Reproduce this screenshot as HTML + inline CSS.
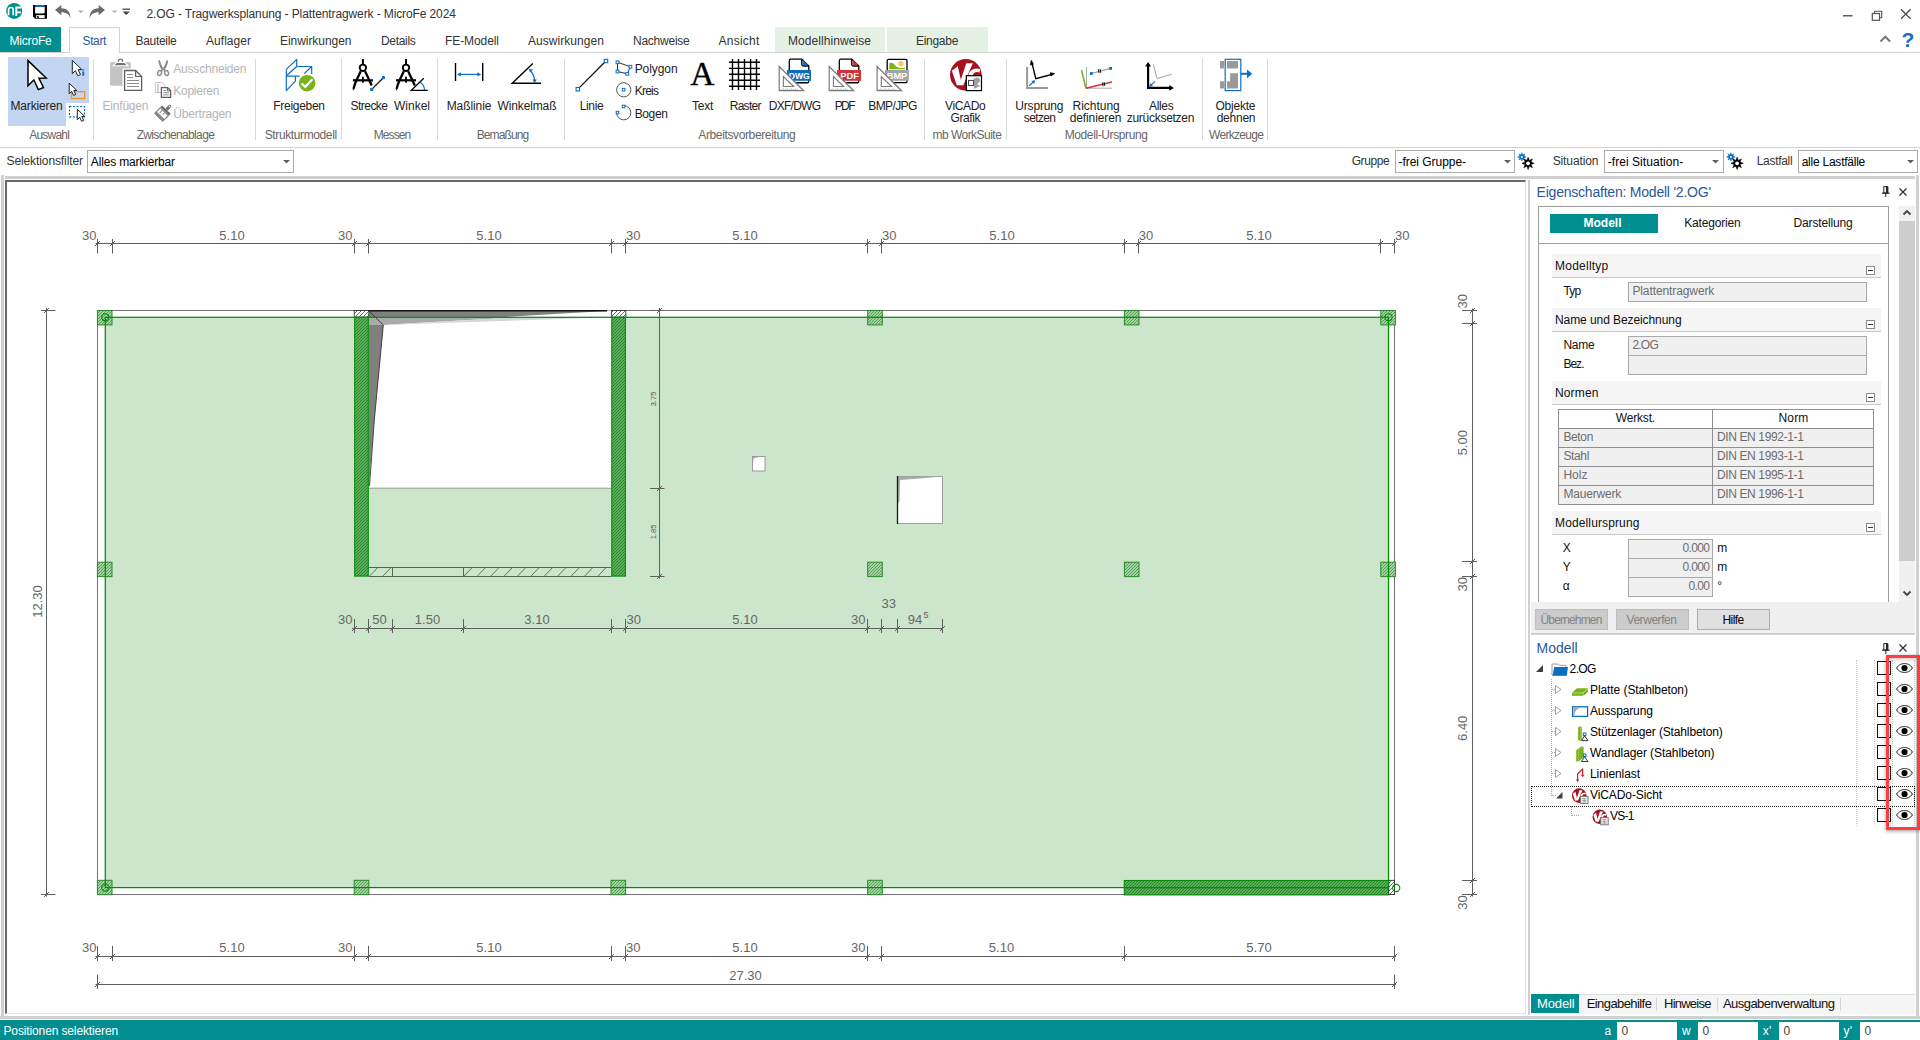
<!DOCTYPE html>
<html lang="de"><head><meta charset="utf-8"><title>MicroFe 2024</title><style>
html,body{margin:0;padding:0}
body{width:1920px;height:1040px;overflow:hidden;background:#fff;position:relative;font:12px/1 "Liberation Sans",sans-serif;color:#222}
.t{position:absolute;white-space:pre;line-height:1}
.abs,#page div{position:absolute}
#page{position:absolute;left:0;top:0;width:1920px;height:1040px;overflow:hidden}
#page>div{left:0;top:0}
svg{position:absolute;overflow:visible}
</style></head>
<body><div id="page">
<div id="titlebar">
<svg id="ic-title" style="left:0;top:0" width="1920" height="56" viewBox="0 0 1920 56" font-family="'Liberation Sans',sans-serif"><circle cx="14.2" cy="10.9" r="8" fill="#008e91"/><path d="M8.6 15.3V9.6Q8.6 7.5 10.9 7.5Q13.2 7.5 13.2 9.6V15.3" fill="none" stroke="#fff" stroke-width="1.7"/><path d="M16.3 16V7.5H21.4M16.3 12.4H21" fill="none" stroke="#fff" stroke-width="1.9"/><path d="M33 5H47V18.8H35.2L33 16.6Z" fill="#000"/><rect x="35.1" y="5" width="9.6" height="1.9" fill="#0a6fc2"/><path d="M35.1 6.9H44.7V12.2Q44.7 13.6 43.3 13.6H36.5Q35.1 13.6 35.1 12.2Z" fill="#fff"/><rect x="36.2" y="15.1" width="8.4" height="2.9" fill="#fff"/><rect x="37.2" y="15.9" width="1.5" height="2.1" fill="#000"/><path d="M55 10.1L61.3 5V8.2C67.5 8.2 70.6 12 70.4 18.6C69.4 14.5 66.5 12.3 61.3 12.3V15.2Z" fill="#6a6a6a"/><path d="M55 10.1L61.3 5V8.2C67.5 8.2 70.6 12 70.4 18.6C69.4 14.5 66.5 12.3 61.3 12.3V15.2Z" fill="#6a6a6a" transform="translate(160 0) scale(-1 1)"/><path d="M77.8 10.6H83.6L80.7 13.3Z" fill="#b4b4b4"/><path d="M111.6 10.6H117.4L114.5 13.3Z" fill="#b4b4b4"/><path d="M122.5 9.2H130" stroke="#444" stroke-width="1.3"/><path d="M122.5 11.6H130L126.25 15Z" fill="#444"/><path d="M1843 15.8H1852.5" stroke="#444" stroke-width="1.3"/><path d="M1874.5 13.3V11.2H1881.7V17.8H1879.6" fill="none" stroke="#555" stroke-width="1.1"/><rect x="1872.3" y="13.5" width="7.2" height="6.8" fill="none" stroke="#555" stroke-width="1.2"/><path d="M1901 9.3L1910.6 18.9M1910.6 9.3L1901 18.9" stroke="#444" stroke-width="1.3"/><path d="M1880.5 41.5L1885.3 36.7L1890.1 41.5" fill="none" stroke="#777" stroke-width="2"/><text x="1908" y="46.5" text-anchor="middle" font-size="21" font-weight="bold" fill="#1a6fc0">?</text></svg>
<span class="t" style="left:146.5px;top:8.0px;color:#333;letter-spacing:-0.11px;">2.OG - Tragwerksplanung - Plattentragwerk - MicroFe 2024</span>
</div>
<div id="tabs">
<div class="abs" style="left:0px;top:27px;width:61px;height:25px;background:#008e91"></div>
<div class="abs" style="left:775px;top:27px;width:110px;height:25px;background:#e5f1e5"></div>
<div class="abs" style="left:887px;top:27px;width:101px;height:25px;background:#e5f1e5"></div>
<div class="abs" style="left:0px;top:52px;width:1920px;height:1px;background:#d2d2d2"></div>
<div class="abs" style="left:69px;top:27px;width:51px;height:26px;background:#fff;border:1px solid #d2d2d2;border-bottom:none;box-sizing:border-box"></div>
<span class="t" style="left:9.5px;top:35.0px;color:#fff;letter-spacing:-0.19px;">MicroFe</span>
<span class="t" style="left:82.5px;top:35.0px;color:#2b579a;letter-spacing:-0.37px;">Start</span>
<span class="t" style="left:135.5px;top:35.0px;color:#333;letter-spacing:-0.30px;">Bauteile</span>
<span class="t" style="left:206.0px;top:35.0px;color:#333;letter-spacing:0.04px;">Auflager</span>
<span class="t" style="left:280.0px;top:35.0px;color:#333;letter-spacing:-0.05px;">Einwirkungen</span>
<span class="t" style="left:381.0px;top:35.0px;color:#333;letter-spacing:-0.31px;">Details</span>
<span class="t" style="left:445.0px;top:35.0px;color:#333;letter-spacing:-0.08px;">FE-Modell</span>
<span class="t" style="left:528.0px;top:35.0px;color:#333;letter-spacing:0.05px;">Auswirkungen</span>
<span class="t" style="left:633.0px;top:35.0px;color:#333;letter-spacing:-0.24px;">Nachweise</span>
<span class="t" style="left:718.5px;top:35.0px;color:#333;letter-spacing:0.24px;">Ansicht</span>
<span class="t" style="left:788.0px;top:35.0px;color:#333;letter-spacing:0.07px;">Modellhinweise</span>
<span class="t" style="left:916.0px;top:35.0px;color:#333;letter-spacing:-0.29px;">Eingabe</span>
</div>
<div id="ribbon">
<div class="abs" style="left:8px;top:57px;width:58px;height:69px;background:#c2d5f2"></div>
<div class="abs" style="left:66px;top:57px;width:23px;height:46px;background:#c2d5f2"></div>
<div class="abs" style="left:93px;top:59px;width:1px;height:81px;background:#dadada"></div>
<div class="abs" style="left:255px;top:59px;width:1px;height:81px;background:#dadada"></div>
<div class="abs" style="left:341px;top:59px;width:1px;height:81px;background:#dadada"></div>
<div class="abs" style="left:437px;top:59px;width:1px;height:81px;background:#dadada"></div>
<div class="abs" style="left:564px;top:59px;width:1px;height:81px;background:#dadada"></div>
<div class="abs" style="left:924px;top:59px;width:1px;height:81px;background:#dadada"></div>
<div class="abs" style="left:1006px;top:59px;width:1px;height:81px;background:#dadada"></div>
<div class="abs" style="left:1202px;top:59px;width:1px;height:81px;background:#dadada"></div>
<div class="abs" style="left:1267px;top:59px;width:1px;height:81px;background:#dadada"></div>
<div class="abs" style="left:0px;top:147px;width:1920px;height:1px;background:#d2d2d2"></div>
<span class="t" style="left:10.5px;top:100.0px;letter-spacing:-0.15px;">Markieren</span>
<span class="t" style="left:102.5px;top:100.0px;color:#b4b4b4;letter-spacing:-0.20px;">Einfügen</span>
<span class="t" style="left:173.3px;top:63.0px;color:#b4b4b4;letter-spacing:-0.20px;">Ausschneiden</span>
<span class="t" style="left:173.3px;top:85.0px;color:#b4b4b4;letter-spacing:-0.27px;">Kopieren</span>
<span class="t" style="left:173.3px;top:108.0px;color:#b4b4b4;letter-spacing:-0.20px;">Übertragen</span>
<span class="t" style="left:273.3px;top:100.0px;letter-spacing:-0.29px;">Freigeben</span>
<span class="t" style="left:350.5px;top:100.0px;letter-spacing:-0.53px;">Strecke</span>
<span class="t" style="left:394.0px;top:100.0px;">Winkel</span>
<span class="t" style="left:446.7px;top:100.0px;letter-spacing:-0.09px;">Maßlinie</span>
<span class="t" style="left:497.5px;top:100.0px;letter-spacing:-0.13px;">Winkelmaß</span>
<span class="t" style="left:579.7px;top:100.0px;letter-spacing:-0.35px;">Linie</span>
<span class="t" style="left:634.7px;top:63.0px;letter-spacing:-0.08px;">Polygon</span>
<span class="t" style="left:634.7px;top:85.0px;letter-spacing:-0.75px;">Kreis</span>
<span class="t" style="left:634.7px;top:108.0px;letter-spacing:-0.38px;">Bogen</span>
<span class="t" style="left:692.0px;top:100.0px;letter-spacing:-0.25px;">Text</span>
<span class="t" style="left:729.7px;top:100.0px;letter-spacing:-0.71px;">Raster</span>
<span class="t" style="left:768.7px;top:100.0px;letter-spacing:-0.72px;">DXF/DWG</span>
<span class="t" style="left:834.7px;top:100.0px;letter-spacing:-1.57px;">PDF</span>
<span class="t" style="left:868.3px;top:100.0px;letter-spacing:-0.61px;">BMP/JPG</span>
<span class="t" style="left:945.0px;top:100.0px;letter-spacing:-0.36px;">ViCADo</span>
<span class="t" style="left:950.5px;top:112.0px;letter-spacing:-0.42px;">Grafik</span>
<span class="t" style="left:1015.3px;top:100.0px;letter-spacing:-0.17px;">Ursprung</span>
<span class="t" style="left:1023.8px;top:112.0px;letter-spacing:-0.64px;">setzen</span>
<span class="t" style="left:1072.5px;top:100.0px;letter-spacing:-0.02px;">Richtung</span>
<span class="t" style="left:1069.7px;top:112.0px;letter-spacing:-0.11px;">definieren</span>
<span class="t" style="left:1149.0px;top:100.0px;letter-spacing:-0.34px;">Alles</span>
<span class="t" style="left:1126.7px;top:112.0px;letter-spacing:-0.27px;">zurücksetzen</span>
<span class="t" style="left:1215.5px;top:100.0px;letter-spacing:-0.22px;">Objekte</span>
<span class="t" style="left:1216.7px;top:112.0px;letter-spacing:-0.24px;">dehnen</span>
<span class="t" style="left:29.2px;top:129.0px;color:#666;letter-spacing:-0.77px;">Auswahl</span>
<span class="t" style="left:136.7px;top:129.0px;color:#666;letter-spacing:-0.66px;">Zwischenablage</span>
<span class="t" style="left:264.7px;top:129.0px;color:#666;letter-spacing:-0.38px;">Strukturmodell</span>
<span class="t" style="left:373.7px;top:129.0px;color:#666;letter-spacing:-0.90px;">Messen</span>
<span class="t" style="left:476.7px;top:129.0px;color:#666;letter-spacing:-0.89px;">Bemaßung</span>
<span class="t" style="left:698.3px;top:129.0px;color:#666;letter-spacing:-0.37px;">Arbeitsvorbereitung</span>
<span class="t" style="left:932.5px;top:129.0px;color:#666;letter-spacing:-0.53px;">mb WorkSuite</span>
<span class="t" style="left:1064.7px;top:129.0px;color:#666;letter-spacing:-0.39px;">Modell-Ursprung</span>
<span class="t" style="left:1209.0px;top:129.0px;color:#666;letter-spacing:-0.69px;">Werkzeuge</span>
<svg id="ic-ribbon" style="left:0;top:0" width="1920" height="150" viewBox="0 0 1920 150" font-family="'Liberation Sans',sans-serif"><path d="M28.00 60.60 L28.00 85.80 L33.85 79.95 L38.33 89.58 L43.50 87.56 L38.96 78.24 L46.19 77.99Z" fill="#fff" stroke="#000" stroke-width="1.5" stroke-linejoin="miter"/><path d="M72.30 60.40 L72.30 73.70 L75.39 70.61 L77.75 75.69 L80.48 74.63 L78.09 69.71 L81.90 69.58Z" fill="#fff" stroke="#222" stroke-width="1.0" stroke-linejoin="miter"/><path d="M82.3 69.2H84.2V70.6H82.3ZM82.3 71.4H84.2V75.7H82.3Z" fill="#0a6fc2"/><rect x="71.5" y="91.6" width="13.2" height="6.9" fill="none" stroke="#f7941d" stroke-width="1.3"/><path d="M69.20 83.20 L69.20 93.80 L71.66 91.34 L73.55 95.39 L75.72 94.54 L73.81 90.62 L76.85 90.51Z" fill="#fff" stroke="#222" stroke-width="1.0" stroke-linejoin="miter"/><rect x="69.5" y="106.5" width="15" height="10.3" fill="none" stroke="#0a6fc2" stroke-width="1.2" stroke-dasharray="2 1.5"/><path d="M77.30 109.30 L77.30 119.70 L79.71 117.29 L81.56 121.26 L83.70 120.43 L81.82 116.58 L84.81 116.48Z" fill="#fff" stroke="#222" stroke-width="1.0" stroke-linejoin="miter"/><rect x="110.1" y="62" width="20.7" height="23.8" rx="1.5" fill="#c3c3c3"/><circle cx="120.5" cy="61.2" r="2.1" fill="#fff" stroke="#707070" stroke-width="1.4"/><path d="M113 65.8L116.6 62.4H124.4L128 65.8Z" fill="#707070" stroke="#fff" stroke-width="1.1"/><path d="M122.5 68.5H132V90.7H122.5Z" fill="#fff"/><path d="M124.6 70.5H135.6L141.6 76.5V90.4H124.6Z" fill="#fff" stroke="#5e5e5e" stroke-width="1.3"/><path d="M135.6 70.5V76.5H141.6" fill="none" stroke="#5e5e5e" stroke-width="1.2"/><path d="M127 74.5H133M127 77.5H133M127 80.5H139M127 83.5H139M127 86.5H139" stroke="#8a8a8a" stroke-width="1"/><path d="M158.2 60.4L159.9 60.2C161 64.5 162.6 67.6 164.6 69.9L162.9 71.4C160.4 68.4 158.8 64.8 158.2 60.4ZM168.2 60.4L166.5 60.2C165.4 64.5 163.8 67.6 161.8 69.9L163.5 71.4C166 68.4 167.6 64.8 168.2 60.4Z" fill="#8a8a8a"/><path d="M163 69L160 72M163.4 69L166.4 72" stroke="#8a8a8a" stroke-width="1.6"/><ellipse cx="159.6" cy="73" rx="1.9" ry="2.5" fill="#fff" stroke="#8a8a8a" stroke-width="1.4" transform="rotate(18 159.6 73)"/><ellipse cx="166.6" cy="73" rx="1.9" ry="2.5" fill="#fff" stroke="#8a8a8a" stroke-width="1.4" transform="rotate(-18 166.6 73)"/><path d="M155.4 82.5H162L164.8 85.3V92.5H155.4Z" fill="#fff" stroke="#c6c6c6" stroke-width="1"/><path d="M157 85H159M157 87H159M157 89H159M157 91H159" stroke="#9a9a9a" stroke-width="0.9"/><path d="M161.4 87.6H167.6L170.6 90.6V97.4H161.4Z" fill="#fff" stroke="#5e5e5e" stroke-width="1.3"/><path d="M167.4 87.8V90.8H170.4" fill="none" stroke="#5e5e5e" stroke-width="1"/><path d="M163.3 90.5H166M163.3 92.7H168.8M163.3 94.9H168.8" stroke="#7a7a7a" stroke-width="0.9"/><g transform="translate(163.2 112.8) rotate(45)"><rect x="-1.6" y="-10.8" width="3.2" height="6.5" rx="1.4" fill="#777"/><circle cx="0" cy="-9" r="0.8" fill="#fff"/><rect x="-6" y="-4.5" width="12" height="2.2" fill="#6a6a6a"/><rect x="-5.6" y="-1.6" width="11.2" height="7.8" fill="#fff" stroke="#8a8a8a" stroke-width="1.2"/><rect x="-5.6" y="3.6" width="11.2" height="3" fill="#8a8a8a"/><path d="M-2.5 -1V2.5M1 -1V1.5" stroke="#8a8a8a" stroke-width="1"/></g><path d="M286.3 69.4L296.7 59.4V66.5H311.7V74M286.3 69.4V90.7L295.4 81.1V76.1M286.3 76.1H299.6M287.2 75L296.7 66.5M304.2 73.6L311.7 66.5" stroke="#0a6fc2" stroke-width="1.2" fill="none" stroke-linejoin="round"/><circle cx="307.1" cy="83.2" r="8.3" fill="#7ab317"/><path d="M301.6 83.5L305.2 86.9L312.4 79.2" fill="none" stroke="#fff" stroke-width="2.3"/><path d="M362.9 59V65" stroke="#000" stroke-width="2"/><path d="M360.7 71.2L355.7 82C354.5 85 353.9 87 353.7 88.5" stroke="#000" stroke-width="2.3" fill="none"/><path d="M354.79999999999995 87.5L352.7 88L353.0 90.9Z" fill="#000"/><path d="M365.09999999999997 71.2L371.7 85.5" stroke="#000" stroke-width="2.3" fill="none"/><path d="M352.9 80.3H372.9" stroke="#000" stroke-width="2.2"/><path d="M362.9 76.8V82.8" stroke="#000" stroke-width="1.8"/><circle cx="362.9" cy="67.8" r="3.2" fill="#fff" stroke="#000" stroke-width="1.9"/><path d="M372.5 88.6L382.8 78.2" stroke="#111" stroke-width="1.3"/><rect x="370.20" y="87.90" width="3" height="3" fill="#0a6fc2" stroke="#0a6fc2" stroke-width="0"/><rect x="381.90" y="76.10" width="3" height="3" fill="#0a6fc2" stroke="#0a6fc2" stroke-width="0"/><path d="M406 59V65" stroke="#000" stroke-width="2"/><path d="M403.8 71.2L398.8 82C397.6 85 397 87 396.8 88.5" stroke="#000" stroke-width="2.3" fill="none"/><path d="M397.9 87.5L395.8 88L396.1 90.9Z" fill="#000"/><path d="M408.2 71.2L414.8 85.5" stroke="#000" stroke-width="2.3" fill="none"/><path d="M396 80.3H416" stroke="#000" stroke-width="2.2"/><path d="M406 76.8V82.8" stroke="#000" stroke-width="1.8"/><circle cx="406" cy="67.8" r="3.2" fill="#fff" stroke="#000" stroke-width="1.9"/><path d="M427.9 90.4H411.3L423.8 78.2" fill="none" stroke="#000" stroke-width="1.3"/><path d="M420.2 82.2Q424.2 84.8 424.6 90" fill="none" stroke="#0a6fc2" stroke-width="1.2"/><path d="M455.5 62.9V81M482.7 62.9V81" stroke="#000" stroke-width="1.4"/><path d="M459 74.4H479" stroke="#0a6fc2" stroke-width="1.2"/><path d="M457 74.4L460.8 72.2V76.6ZM481.2 74.4L477.4 72.2V76.6Z" fill="#0a6fc2"/><path d="M541 83.3H512.2L532.8 63.4" fill="none" stroke="#000" stroke-width="1.4"/><path d="M530.2 70.5Q534.5 75 534.6 81" fill="none" stroke="#0a6fc2" stroke-width="1.3"/><path d="M528.8 69L533 69.6L530 72.6ZM534.7 83L532.4 79.6H536.8Z" fill="#0a6fc2"/><path d="M578.6 88.4L605.2 61.8" stroke="#111" stroke-width="1.3"/><rect x="576.10" y="87.50" width="3.4" height="3.4" fill="#fff" stroke="#0a6fc2" stroke-width="1.1"/><rect x="604.30" y="59.30" width="3.4" height="3.4" fill="#fff" stroke="#0a6fc2" stroke-width="1.1"/><path d="M617.5 62.3L630.4 66.7L627.3 73.8L617.5 71.5Z" fill="none" stroke="#333" stroke-width="1"/><rect x="616.10" y="60.90" width="2.8" height="2.8" fill="#fff" stroke="#0a6fc2" stroke-width="1"/><rect x="629.00" y="65.30" width="2.8" height="2.8" fill="#fff" stroke="#0a6fc2" stroke-width="1"/><rect x="625.90" y="72.40" width="2.8" height="2.8" fill="#fff" stroke="#0a6fc2" stroke-width="1"/><rect x="616.10" y="70.10" width="2.8" height="2.8" fill="#fff" stroke="#0a6fc2" stroke-width="1"/><circle cx="623.75" cy="89.8" r="7.1" fill="none" stroke="#555" stroke-width="1"/><rect x="622.30" y="88.40" width="2.6" height="2.6" fill="#fff" stroke="#0a6fc2" stroke-width="1"/><path d="M623.75 105.65A7.1 7.1 0 1 1 616.65 112.75" fill="none" stroke="#555" stroke-width="1"/><rect x="622.20" y="105.20" width="2.6" height="2.6" fill="#fff" stroke="#0a6fc2" stroke-width="1"/><rect x="616.20" y="111.30" width="2.6" height="2.6" fill="#fff" stroke="#0a6fc2" stroke-width="1"/><text x="702.3" y="84.6" text-anchor="middle" font-family="'Liberation Serif',serif" font-size="33.5" fill="#000" stroke="#000" stroke-width="0.35">A</text><path d="M732.5 59V90M738.5 59V90M744.5 59V90M750.6 59V90M756.5 59V90M729 62.3H760M729 68.4H760M729 74.3H760M729 80.3H760M729 86.3H760" stroke="#000" stroke-width="1.4"/><path d="M790.8 59.2H801.8L808.8 66V81.2Q808.8 82.75 807.3 82.75H790.8Q789.3 82.75 789.3 81.2V60.7Q789.3 59.2 790.8 59.2Z" fill="#fff" stroke="#000" stroke-width="1.3"/><path d="M801.8 59.2V64.5Q801.8 66 803.3 66H808.8" fill="none" stroke="#000" stroke-width="1.3"/><path d="M802.5999999999999 59.6L808.4 65.3H803.5999999999999Q802.5999999999999 65.3 802.5999999999999 64.3Z" fill="#0a6fc2"/><rect x="787" y="70" width="24" height="10.8" fill="#0a6fc2"/><text x="799.3" y="79" text-anchor="middle" font-size="9.5" font-weight="bold" fill="#fff" textLength="21" lengthAdjust="spacingAndGlyphs">DWG</text><path d="M779.2 66.5V90.7H803.7Z" fill="#fff" stroke="#7a7a7a" stroke-width="1.2" stroke-linejoin="miter"/><path d="M783.4000000000001 76.5V86.5H793.7Z" fill="#fff" stroke="#7a7a7a" stroke-width="1.1"/><path d="M781.2 90.2v-1.2M783.2 90.2v-1.8M785.2 90.2v-1.2M787.2 90.2v-1.8M789.2 90.2v-1.2M791.2 90.2v-1.8M793.2 90.2v-1.2M795.2 90.2v-1.8M797.2 90.2v-1.2" stroke="#8a8a8a" stroke-width="0.7"/><path d="M840.8 59.2H851.8L858.8 66V81.2Q858.8 82.75 857.3 82.75H840.8Q839.3 82.75 839.3 81.2V60.7Q839.3 59.2 840.8 59.2Z" fill="#fff" stroke="#000" stroke-width="1.3"/><path d="M851.8 59.2V64.5Q851.8 66 853.3 66H858.8" fill="none" stroke="#000" stroke-width="1.3"/><path d="M852.5999999999999 59.6L858.4 65.3H853.5999999999999Q852.5999999999999 65.3 852.5999999999999 64.3Z" fill="#d13438"/><rect x="837" y="70" width="24" height="10.8" fill="#d13438"/><text x="849.6" y="79" text-anchor="middle" font-size="9.5" font-weight="bold" fill="#fff" textLength="18.5" lengthAdjust="spacingAndGlyphs">PDF</text><path d="M829.2 66.5V90.7H853.7Z" fill="#fff" stroke="#7a7a7a" stroke-width="1.2" stroke-linejoin="miter"/><path d="M833.4000000000001 76.5V86.5H843.7Z" fill="#fff" stroke="#7a7a7a" stroke-width="1.1"/><path d="M831.2 90.2v-1.2M833.2 90.2v-1.8M835.2 90.2v-1.2M837.2 90.2v-1.8M839.2 90.2v-1.2M841.2 90.2v-1.8M843.2 90.2v-1.2M845.2 90.2v-1.8M847.2 90.2v-1.2" stroke="#8a8a8a" stroke-width="0.7"/><rect x="887.2" y="59.3" width="19.8" height="23.4" rx="1.3" fill="#fff" stroke="#000" stroke-width="1.3"/><circle cx="900.9" cy="63.7" r="2.7" fill="#fbc55a"/><path d="M889.3 69.2V63.2C891.5 62.2 893.2 63 895 65.2C897 67.6 899.5 68.6 904.8 67.4V69.2Z" fill="#7ab317"/><rect x="885" y="70" width="23.8" height="10.8" fill="#a3a3a3"/><text x="897" y="79" text-anchor="middle" font-size="9.5" font-weight="bold" fill="#fff" textLength="20.5" lengthAdjust="spacingAndGlyphs">BMP</text><path d="M877.1 66.5V90.7H901.6Z" fill="#fff" stroke="#7a7a7a" stroke-width="1.2" stroke-linejoin="miter"/><path d="M881.3000000000001 76.5V86.5H891.6Z" fill="#fff" stroke="#7a7a7a" stroke-width="1.1"/><path d="M879.1 90.2v-1.2M881.1 90.2v-1.8M883.1 90.2v-1.2M885.1 90.2v-1.8M887.1 90.2v-1.2M889.1 90.2v-1.8M891.1 90.2v-1.2M893.1 90.2v-1.8M895.1 90.2v-1.2" stroke="#8a8a8a" stroke-width="0.7"/><circle cx="965.8" cy="74.8" r="15.8" fill="#a6121e"/><path d="M951.80 70.80L957.80 66.30L960.80 79.80L966.30 63.30L972.80 63.30L963.30 85.30L956.80 85.30Z" fill="#fff"/><path d="M980.30 69.30C974.80 66.80 969.30 69.80 968.30 75.80C967.60 80.80 970.80 83.80 975.80 83.30L976.30 80.30C973.80 80.60 972.10 79.00 972.60 75.80C973.30 72.30 976.30 71.00 979.30 72.50Z" fill="#fff"/><rect x="966.3" y="75.7" width="15.2" height="14.9" fill="#fff" stroke="#000" stroke-width="1.2"/><circle cx="977" cy="80.3" r="2.9" fill="#a0a0a0"/><path d="M973.8 78.5H977.5V84.5L980.5 85.8L973.8 88.9Z" fill="#a0a0a0"/><rect x="968.5" y="80.4" width="5" height="5" fill="#fff" stroke="#333" stroke-width="0.9"/><path d="M1027.1 67V88H1048" fill="none" stroke="#999" stroke-width="2"/><path d="M1031.7 61.8L1035.8 78.6L1052.6 74.2" fill="none" stroke="#000" stroke-width="1.4"/><path d="M1031.2 60.2L1033.6 64.3L1030.2 65.1ZM1054.8 73.6L1051 75.9L1050.2 72.6Z" fill="#000" stroke="#000" stroke-width="0.5"/><path d="M1029.2 85.7L1033.6 81.6" stroke="#0a6fc2" stroke-width="1.2"/><path d="M1034.9 80.4L1034 83.4L1031.9 81.2Z" fill="#0a6fc2" stroke="#0a6fc2" stroke-width="0.5"/><path d="M1086.5 67V88.2H1112" fill="none" stroke="#a0a0a0" stroke-width="0.9"/><path d="M1081.5 70.1L1085.9 88.2" stroke="#7ab317" stroke-width="1.6"/><path d="M1085.9 88.2L1112 81.9" stroke="#d13438" stroke-width="1.5"/><path d="M1091.4 73.5L1110.6 68.4" stroke="#999" stroke-width="1.1"/><rect x="1090.00" y="72.10" width="2.8" height="2.8" fill="#0a6fc2" stroke="#0a6fc2" stroke-width="0"/><rect x="1109.20" y="67.00" width="2.8" height="2.8" fill="#0a6fc2" stroke="#0a6fc2" stroke-width="0"/><path d="M1098.3 69.2L1099.1 73.2M1100 68.8L1100.8 72.8M1102.3 82.5L1103.1 86.3M1104 82L1104.8 85.9" stroke="#000" stroke-width="0.9"/><path d="M1148.1 65V87.9H1171" fill="none" stroke="#000" stroke-width="2.2"/><path d="M1148.1 62L1151 66.5H1145.2ZM1173.8 87.9L1169.3 90.8V85Z" fill="#000"/><path d="M1153.3 64.4L1157 78.5L1171.6 74.3" fill="none" stroke="#a0a0a0" stroke-width="1"/><path d="M1155.2 81.3L1150.8 85.3" stroke="#0a6fc2" stroke-width="1.1"/><path d="M1149.6 86.4L1150.5 83.5L1152.5 85.7Z" fill="#0a6fc2" stroke="#0a6fc2" stroke-width="0.5"/><path d="M1220 61.1H1224.2V68.6H1220ZM1227 61.1H1238V68.6H1227ZM1220 81.3H1224.2V88.6H1220ZM1227 81.3H1230.1V73.3H1238V88.6H1227Z" fill="#9a9a9a"/><rect x="1225.2" y="59.3" width="15.6" height="31.3" fill="none" stroke="#0a6fc2" stroke-width="1.2"/><path d="M1240.8 73.8H1247.5" stroke="#0a6fc2" stroke-width="2"/><path d="M1247 69.4L1252.2 73.8L1247 78.2Z" fill="#0a6fc2"/></svg>
</div>
<div id="filterbar">
<span class="t" style="left:6.5px;top:155.0px;color:#333;letter-spacing:-0.10px;">Selektionsfilter</span>
<div class="abs" style="left:87px;top:150px;width:207px;height:23px;background:#fff;border:1px solid #ababab;box-sizing:border-box"></div><span class="t" style="left:90.8px;top:156.0px;color:#000;letter-spacing:-0.16px;">Alles markierbar</span><svg class="abs" style="left:282.5px;top:160px" width="8" height="4"><path d="M0 0h7l-3.5 3.5z" fill="#606060"/></svg>
<span class="t" style="left:1351.7px;top:155.0px;color:#333;letter-spacing:-0.40px;">Gruppe</span>
<div class="abs" style="left:1395px;top:150px;width:119.5px;height:23px;background:#fff;border:1px solid #ababab;box-sizing:border-box"></div><span class="t" style="left:1398.5px;top:156.0px;color:#000;letter-spacing:-0.04px;">-frei Gruppe-</span><svg class="abs" style="left:1503.5px;top:160px" width="8" height="4"><path d="M0 0h7l-3.5 3.5z" fill="#606060"/></svg>
<span class="t" style="left:1552.7px;top:155.0px;color:#333;letter-spacing:-0.12px;">Situation</span>
<div class="abs" style="left:1604px;top:150px;width:119.5px;height:23px;background:#fff;border:1px solid #ababab;box-sizing:border-box"></div><span class="t" style="left:1607.7px;top:156.0px;color:#000;letter-spacing:0.06px;">-frei Situation-</span><svg class="abs" style="left:1712.3px;top:160px" width="8" height="4"><path d="M0 0h7l-3.5 3.5z" fill="#606060"/></svg>
<span class="t" style="left:1756.7px;top:155.0px;color:#333;letter-spacing:-0.30px;">Lastfall</span>
<div class="abs" style="left:1797.5px;top:150px;width:120.0px;height:23px;background:#fff;border:1px solid #ababab;box-sizing:border-box"></div><span class="t" style="left:1801.7px;top:156.0px;color:#000;letter-spacing:-0.24px;">alle Lastfälle</span><svg class="abs" style="left:1906.5px;top:160px" width="8" height="4"><path d="M0 0h7l-3.5 3.5z" fill="#606060"/></svg>
<svg id="ic-gears" style="left:0;top:148px" width="1920" height="28" viewBox="0 148 1920 28"><path d="M1521.90 152.70 L1522.70 154.96 L1524.87 153.93 L1523.84 156.10 L1526.10 156.90 L1523.84 157.70 L1524.87 159.87 L1522.70 158.84 L1521.90 161.10 L1521.10 158.84 L1518.93 159.87 L1519.96 157.70 L1517.70 156.90 L1519.96 156.10 L1518.93 153.93 L1521.10 154.96Z" fill="#0a6fc2" stroke="#0a6fc2" stroke-width="0.6" stroke-linejoin="round"/><circle cx="1521.9" cy="156.9" r="1.0" fill="#fff"/><path d="M1528.10 157.20 L1529.29 160.44 L1532.41 158.99 L1530.96 162.11 L1534.20 163.30 L1530.96 164.49 L1532.41 167.61 L1529.29 166.16 L1528.10 169.40 L1526.91 166.16 L1523.79 167.61 L1525.24 164.49 L1522.00 163.30 L1525.24 162.11 L1523.79 158.99 L1526.91 160.44Z" fill="#000" stroke="#000" stroke-width="0.6" stroke-linejoin="round"/><circle cx="1528.1" cy="163.3" r="1.9" fill="#fff"/><path d="M1730.90 152.70 L1731.70 154.96 L1733.87 153.93 L1732.84 156.10 L1735.10 156.90 L1732.84 157.70 L1733.87 159.87 L1731.70 158.84 L1730.90 161.10 L1730.10 158.84 L1727.93 159.87 L1728.96 157.70 L1726.70 156.90 L1728.96 156.10 L1727.93 153.93 L1730.10 154.96Z" fill="#0a6fc2" stroke="#0a6fc2" stroke-width="0.6" stroke-linejoin="round"/><circle cx="1730.9" cy="156.9" r="1.0" fill="#fff"/><path d="M1737.10 157.20 L1738.29 160.44 L1741.41 158.99 L1739.96 162.11 L1743.20 163.30 L1739.96 164.49 L1741.41 167.61 L1738.29 166.16 L1737.10 169.40 L1735.91 166.16 L1732.79 167.61 L1734.24 164.49 L1731.00 163.30 L1734.24 162.11 L1732.79 158.99 L1735.91 160.44Z" fill="#000" stroke="#000" stroke-width="0.6" stroke-linejoin="round"/><circle cx="1737.1" cy="163.3" r="1.9" fill="#fff"/></svg>
</div>
<div class="abs" style="left:1px;top:175px;width:3px;height:841px;background:#d0d0d0"></div>
<div class="abs" style="left:5px;top:176px;width:1910px;height:3px;background:#d0d0d0"></div>
<div class="abs" style="left:1916px;top:175px;width:3px;height:841px;background:#d0d0d0"></div>
<div class="abs" style="left:1528px;top:180px;width:2px;height:835px;background:#d0d0d0"></div>
<div class="abs" style="left:0px;top:1016px;width:1920px;height:3px;background:#d0d0d0"></div>
<div id="status">
<div class="abs" style="left:0px;top:1020px;width:1920px;height:20px;background:#008e91"></div>
<span class="t" style="left:3.5px;top:1025.0px;color:#fff;letter-spacing:-0.13px;">Positionen selektieren</span>
<span class="t" style="left:1604.4px;top:1025.0px;color:#fff;letter-spacing:-1.27px;">a</span>
<div class="abs" style="left:1617px;top:1022px;width:60px;height:18px;background:#fff"></div>
<span class="t" style="left:1621.5px;top:1025.0px;color:#444;">0</span>
<span class="t" style="left:1682.0px;top:1025.0px;color:#fff;letter-spacing:1.33px;">w</span>
<div class="abs" style="left:1698px;top:1022px;width:60px;height:18px;background:#fff"></div>
<span class="t" style="left:1702.5px;top:1025.0px;color:#444;">0</span>
<span class="t" style="left:1762.7px;top:1025.0px;color:#fff;letter-spacing:0.35px;">x&#x27;</span>
<div class="abs" style="left:1779px;top:1022px;width:60px;height:18px;background:#fff"></div>
<span class="t" style="left:1783.5px;top:1025.0px;color:#444;">0</span>
<span class="t" style="left:1843.5px;top:1025.0px;color:#fff;letter-spacing:0.35px;">y&#x27;</span>
<div class="abs" style="left:1860px;top:1022px;width:60px;height:18px;background:#fff"></div>
<span class="t" style="left:1864.5px;top:1025.0px;color:#444;">0</span>
</div>
<div id="props">
<span class="t" style="left:1536.6px;top:185.0px;font-size:14px;color:#2b579a;letter-spacing:-0.22px;">Eigenschaften: Modell &#x27;2.OG&#x27;</span>
<svg style="left:1882px;top:186px" width="8" height="12" viewBox="0 0 8 12"><path d="M1.8 0.6H5.9V7H1.8Z" fill="#fff" stroke="#222" stroke-width="1"/><path d="M4 0.6H5.9V7H4Z" fill="#222"/><path d="M0 7.2H7.6" stroke="#222" stroke-width="1.2"/><path d="M3.8 7.5V11" stroke="#222" stroke-width="1"/></svg>
<svg style="left:1898.5px;top:188px" width="8" height="8" viewBox="0 0 8 8"><path d="M0.5 0.5L7.5 7.5M7.5 0.5L0.5 7.5" stroke="#333" stroke-width="1.3" fill="none"/></svg>
<div class="abs" style="left:1538px;top:206px;width:351px;height:396px;border:1px solid #a0a0a0;border-bottom:none;box-sizing:border-box"></div>
<div class="abs" style="left:1538px;top:243px;width:351px;height:1px;background:#a0a0a0"></div>
<div class="abs" style="left:1550px;top:214px;width:108px;height:19px;background:#008e91"></div>
<span class="t" style="left:1583.5px;top:217.0px;color:#fff;font-weight:bold;">Modell</span>
<span class="t" style="left:1684.3px;top:217.0px;color:#111;letter-spacing:-0.18px;">Kategorien</span>
<span class="t" style="left:1793.5px;top:217.0px;color:#111;letter-spacing:-0.15px;">Darstellung</span>
<div class="abs" style="left:1899px;top:206px;width:16px;height:396px;background:#f0f0f0"></div>
<div class="abs" style="left:1899px;top:221px;width:16px;height:340px;background:#cdcdcd"></div>
<svg style="left:1903px;top:210px" width="8" height="5"><path d="M0.5 4.5L4 1L7.5 4.5" stroke="#454545" stroke-width="1.9" fill="none"/></svg>
<svg style="left:1903px;top:591px" width="8" height="5"><path d="M0.5 0.5L4 4L7.5 0.5" stroke="#454545" stroke-width="1.9" fill="none"/></svg>
<div class="abs" style="left:1552px;top:254px;width:329px;height:24px;background:#f5f5f5;border-bottom:1px solid #c8c8c8;box-sizing:border-box"></div><span class="t" style="left:1555.0px;top:260.0px;color:#111;letter-spacing:0.24px;">Modelltyp</span><div class="abs" style="left:1866px;top:266px;width:9px;height:9px;border:1px solid #8a8a8a;box-sizing:border-box;background:#fff"><div style="left:1px;top:3px;width:5px;height:1px;background:#333"></div></div>
<div class="abs" style="left:1552px;top:308px;width:329px;height:24px;background:#f5f5f5;border-bottom:1px solid #c8c8c8;box-sizing:border-box"></div><span class="t" style="left:1555.0px;top:314.0px;color:#111;letter-spacing:-0.08px;">Name und Bezeichnung</span><div class="abs" style="left:1866px;top:320px;width:9px;height:9px;border:1px solid #8a8a8a;box-sizing:border-box;background:#fff"><div style="left:1px;top:3px;width:5px;height:1px;background:#333"></div></div>
<div class="abs" style="left:1552px;top:381px;width:329px;height:24px;background:#f5f5f5;border-bottom:1px solid #c8c8c8;box-sizing:border-box"></div><span class="t" style="left:1555.0px;top:387.0px;color:#111;letter-spacing:0.14px;">Normen</span><div class="abs" style="left:1866px;top:393px;width:9px;height:9px;border:1px solid #8a8a8a;box-sizing:border-box;background:#fff"><div style="left:1px;top:3px;width:5px;height:1px;background:#333"></div></div>
<div class="abs" style="left:1552px;top:511px;width:329px;height:24px;background:#f5f5f5;border-bottom:1px solid #c8c8c8;box-sizing:border-box"></div><span class="t" style="left:1555.0px;top:517.0px;color:#111;letter-spacing:0.13px;">Modellursprung</span><div class="abs" style="left:1866px;top:523px;width:9px;height:9px;border:1px solid #8a8a8a;box-sizing:border-box;background:#fff"><div style="left:1px;top:3px;width:5px;height:1px;background:#333"></div></div>
<span class="t" style="left:1563.4px;top:285.0px;color:#111;letter-spacing:-0.75px;">Typ</span>
<div class="abs" style="left:1628px;top:282px;width:239px;height:20px;background:#f0f0f0;border:1px solid #a9a9a9;box-sizing:border-box"></div>
<span class="t" style="left:1632.4px;top:285.0px;color:#6d6d6d;letter-spacing:-0.10px;">Plattentragwerk</span>
<span class="t" style="left:1563.4px;top:339.0px;color:#111;letter-spacing:-0.23px;">Name</span>
<div class="abs" style="left:1628px;top:336px;width:239px;height:20px;background:#f0f0f0;border:1px solid #a9a9a9;box-sizing:border-box"></div>
<span class="t" style="left:1632.4px;top:339.0px;color:#6d6d6d;letter-spacing:-0.77px;">2.OG</span>
<span class="t" style="left:1563.4px;top:358.0px;color:#111;letter-spacing:-0.98px;">Bez.</span>
<div class="abs" style="left:1628px;top:355px;width:239px;height:20px;background:#f0f0f0;border:1px solid #a9a9a9;box-sizing:border-box"></div>
<div class="abs" style="left:1558px;top:409px;width:316px;height:96px;background:#f0f0f0;border:1px solid #8f8f8f;box-sizing:border-box"></div>
<div class="abs" style="left:1559px;top:410px;width:314px;height:18px;background:#fff"></div>
<div class="abs" style="left:1558px;top:428px;width:316px;height:1px;background:#8f8f8f"></div>
<div class="abs" style="left:1558px;top:447px;width:316px;height:1px;background:#8f8f8f"></div>
<div class="abs" style="left:1558px;top:466px;width:316px;height:1px;background:#8f8f8f"></div>
<div class="abs" style="left:1558px;top:485px;width:316px;height:1px;background:#8f8f8f"></div>
<div class="abs" style="left:1712px;top:409px;width:1px;height:96px;background:#8f8f8f"></div>
<span class="t" style="left:1615.8px;top:412.0px;color:#111;letter-spacing:-0.18px;">Werkst.</span>
<span class="t" style="left:1778.5px;top:412.0px;color:#111;letter-spacing:0.17px;">Norm</span>
<span class="t" style="left:1563.4px;top:431.0px;color:#6d6d6d;letter-spacing:-0.35px;">Beton</span>
<span class="t" style="left:1716.9px;top:431.0px;color:#6d6d6d;letter-spacing:-0.36px;">DIN EN 1992-1-1</span>
<span class="t" style="left:1563.4px;top:450.0px;color:#6d6d6d;letter-spacing:-0.35px;">Stahl</span>
<span class="t" style="left:1716.9px;top:450.0px;color:#6d6d6d;letter-spacing:-0.36px;">DIN EN 1993-1-1</span>
<span class="t" style="left:1563.4px;top:469.0px;color:#6d6d6d;letter-spacing:0.02px;">Holz</span>
<span class="t" style="left:1716.9px;top:469.0px;color:#6d6d6d;letter-spacing:-0.36px;">DIN EN 1995-1-1</span>
<span class="t" style="left:1563.4px;top:488.0px;color:#6d6d6d;letter-spacing:-0.19px;">Mauerwerk</span>
<span class="t" style="left:1716.9px;top:488.0px;color:#6d6d6d;letter-spacing:-0.36px;">DIN EN 1996-1-1</span>
<div class="abs" style="left:1628px;top:539px;width:85px;height:20px;background:#f0f0f0;border:1px solid #a9a9a9;box-sizing:border-box"></div>
<span class="t" style="left:1562.7px;top:542.0px;color:#111;letter-spacing:-0.70px;">X</span>
<span class="t" style="left:1682.5px;top:542.0px;color:#6d6d6d;letter-spacing:-0.67px;">0.000</span>
<span class="t" style="left:1717.3px;top:542.0px;color:#111;letter-spacing:0.20px;">m</span>
<div class="abs" style="left:1628px;top:558px;width:85px;height:20px;background:#f0f0f0;border:1px solid #a9a9a9;box-sizing:border-box"></div>
<span class="t" style="left:1562.7px;top:561.0px;color:#111;letter-spacing:-0.70px;">Y</span>
<span class="t" style="left:1682.5px;top:561.0px;color:#6d6d6d;letter-spacing:-0.67px;">0.000</span>
<span class="t" style="left:1717.3px;top:561.0px;color:#111;letter-spacing:0.20px;">m</span>
<div class="abs" style="left:1628px;top:577px;width:85px;height:20px;background:#f0f0f0;border:1px solid #a9a9a9;box-sizing:border-box"></div>
<span class="t" style="left:1562.7px;top:580.0px;color:#111;letter-spacing:0.36px;">α</span>
<span class="t" style="left:1688.5px;top:580.0px;color:#6d6d6d;letter-spacing:-0.66px;">0.00</span>
<span class="t" style="left:1717.3px;top:580.0px;color:#111;letter-spacing:-0.60px;">°</span>
<div class="abs" style="left:1531px;top:602px;width:384px;height:31px;background:#f0f0f0"></div>
<div class="abs" style="left:1535px;top:609px;width:73px;height:21px;background:#cccccc;border:1px solid #bfbfbf;box-sizing:border-box"></div>
<span class="t" style="left:1540.5px;top:614.0px;color:#838383;letter-spacing:-0.84px;">Übernehmen</span>
<div class="abs" style="left:1616px;top:609px;width:73px;height:21px;background:#cccccc;border:1px solid #bfbfbf;box-sizing:border-box"></div>
<span class="t" style="left:1626.5px;top:614.0px;color:#838383;letter-spacing:-0.45px;">Verwerfen</span>
<div class="abs" style="left:1697px;top:609px;width:73px;height:21px;background:#e1e1e1;border:1px solid #adadad;box-sizing:border-box"></div>
<span class="t" style="left:1722.5px;top:614.0px;color:#000;letter-spacing:-0.60px;">Hilfe</span>
<div class="abs" style="left:1531px;top:633px;width:384px;height:2px;background:#d0d0d0"></div>
</div>
<div id="tree">
<span class="t" style="left:1536.6px;top:641.0px;font-size:14px;color:#2b579a;letter-spacing:-0.02px;">Modell</span>
<svg style="left:1882px;top:643px" width="8" height="12" viewBox="0 0 8 12"><path d="M1.8 0.6H5.9V7H1.8Z" fill="#fff" stroke="#222" stroke-width="1"/><path d="M4 0.6H5.9V7H4Z" fill="#222"/><path d="M0 7.2H7.6" stroke="#222" stroke-width="1.2"/><path d="M3.8 7.5V11" stroke="#222" stroke-width="1"/></svg>
<svg style="left:1898.5px;top:643.5px" width="8" height="8" viewBox="0 0 8 8"><path d="M0.5 0.5L7.5 7.5M7.5 0.5L0.5 7.5" stroke="#333" stroke-width="1.3" fill="none"/></svg>
<div class="abs" style="left:1551px;top:679px;width:0px;height:117px;border-left:1px dotted #a8a8a8"></div>
<div class="abs" style="left:1856px;top:660px;width:0px;height:166px;border-left:1px dotted #c8c8c8"></div>
<div class="abs" style="left:1874px;top:660px;width:0px;height:166px;border-left:1px dotted #c8c8c8"></div>
<div class="abs" style="left:1892px;top:660px;width:0px;height:166px;border-left:1px dotted #c8c8c8"></div>
<div class="abs" style="left:1914px;top:660px;width:0px;height:166px;border-left:1px dotted #c8c8c8"></div>
<div class="abs" style="left:1531px;top:786px;width:384px;height:21px;border:1px dotted #222;box-sizing:border-box"></div>
<span class="t" style="left:1569.6px;top:662.5px;color:#000;letter-spacing:-0.64px;">2.OG</span>
<div class="abs" style="left:1877px;top:661px;width:14px;height:14px;border:1px solid #111;box-sizing:border-box;background:#fff"></div>
<svg style="left:1896px;top:663px" width="17" height="10" viewBox="0 0 17 10"><path d="M0.6 5C3 1.2 6 0.6 8.5 0.6S14 1.2 16.4 5C14 8.8 11 9.4 8.5 9.4S3 8.8 0.6 5Z" fill="#fff" stroke="#111" stroke-width="1"/><circle cx="8.5" cy="5" r="3.1" fill="#000"/></svg>
<span class="t" style="left:1590.0px;top:683.5px;color:#000;letter-spacing:-0.08px;">Platte (Stahlbeton)</span>
<div class="abs" style="left:1877px;top:682px;width:14px;height:14px;border:1px solid #111;box-sizing:border-box;background:#fff"></div>
<svg style="left:1896px;top:684px" width="17" height="10" viewBox="0 0 17 10"><path d="M0.6 5C3 1.2 6 0.6 8.5 0.6S14 1.2 16.4 5C14 8.8 11 9.4 8.5 9.4S3 8.8 0.6 5Z" fill="#fff" stroke="#111" stroke-width="1"/><circle cx="8.5" cy="5" r="3.1" fill="#000"/></svg>
<svg style="left:1555px;top:685px" width="7" height="9"><path d="M0.5 0.5L6 4.5L0.5 8.5Z" fill="#fff" stroke="#a0a0a0" stroke-width="1"/></svg>
<div class="abs" style="left:1552px;top:689px;width:3px;height:0px;border-top:1px dotted #a8a8a8"></div>
<span class="t" style="left:1590.0px;top:704.5px;color:#000;letter-spacing:-0.13px;">Aussparung</span>
<div class="abs" style="left:1877px;top:703px;width:14px;height:14px;border:1px solid #111;box-sizing:border-box;background:#fff"></div>
<svg style="left:1896px;top:705px" width="17" height="10" viewBox="0 0 17 10"><path d="M0.6 5C3 1.2 6 0.6 8.5 0.6S14 1.2 16.4 5C14 8.8 11 9.4 8.5 9.4S3 8.8 0.6 5Z" fill="#fff" stroke="#111" stroke-width="1"/><circle cx="8.5" cy="5" r="3.1" fill="#000"/></svg>
<svg style="left:1555px;top:706px" width="7" height="9"><path d="M0.5 0.5L6 4.5L0.5 8.5Z" fill="#fff" stroke="#a0a0a0" stroke-width="1"/></svg>
<div class="abs" style="left:1552px;top:710px;width:3px;height:0px;border-top:1px dotted #a8a8a8"></div>
<span class="t" style="left:1590.0px;top:725.5px;color:#000;letter-spacing:-0.14px;">Stützenlager (Stahlbeton)</span>
<div class="abs" style="left:1877px;top:724px;width:14px;height:14px;border:1px solid #111;box-sizing:border-box;background:#fff"></div>
<svg style="left:1896px;top:726px" width="17" height="10" viewBox="0 0 17 10"><path d="M0.6 5C3 1.2 6 0.6 8.5 0.6S14 1.2 16.4 5C14 8.8 11 9.4 8.5 9.4S3 8.8 0.6 5Z" fill="#fff" stroke="#111" stroke-width="1"/><circle cx="8.5" cy="5" r="3.1" fill="#000"/></svg>
<svg style="left:1555px;top:727px" width="7" height="9"><path d="M0.5 0.5L6 4.5L0.5 8.5Z" fill="#fff" stroke="#a0a0a0" stroke-width="1"/></svg>
<div class="abs" style="left:1552px;top:731px;width:3px;height:0px;border-top:1px dotted #a8a8a8"></div>
<span class="t" style="left:1590.0px;top:746.5px;color:#000;letter-spacing:-0.08px;">Wandlager (Stahlbeton)</span>
<div class="abs" style="left:1877px;top:745px;width:14px;height:14px;border:1px solid #111;box-sizing:border-box;background:#fff"></div>
<svg style="left:1896px;top:747px" width="17" height="10" viewBox="0 0 17 10"><path d="M0.6 5C3 1.2 6 0.6 8.5 0.6S14 1.2 16.4 5C14 8.8 11 9.4 8.5 9.4S3 8.8 0.6 5Z" fill="#fff" stroke="#111" stroke-width="1"/><circle cx="8.5" cy="5" r="3.1" fill="#000"/></svg>
<svg style="left:1555px;top:748px" width="7" height="9"><path d="M0.5 0.5L6 4.5L0.5 8.5Z" fill="#fff" stroke="#a0a0a0" stroke-width="1"/></svg>
<div class="abs" style="left:1552px;top:752px;width:3px;height:0px;border-top:1px dotted #a8a8a8"></div>
<span class="t" style="left:1590.0px;top:767.5px;color:#000;letter-spacing:-0.07px;">Linienlast</span>
<div class="abs" style="left:1877px;top:766px;width:14px;height:14px;border:1px solid #111;box-sizing:border-box;background:#fff"></div>
<svg style="left:1896px;top:768px" width="17" height="10" viewBox="0 0 17 10"><path d="M0.6 5C3 1.2 6 0.6 8.5 0.6S14 1.2 16.4 5C14 8.8 11 9.4 8.5 9.4S3 8.8 0.6 5Z" fill="#fff" stroke="#111" stroke-width="1"/><circle cx="8.5" cy="5" r="3.1" fill="#000"/></svg>
<svg style="left:1555px;top:769px" width="7" height="9"><path d="M0.5 0.5L6 4.5L0.5 8.5Z" fill="#fff" stroke="#a0a0a0" stroke-width="1"/></svg>
<div class="abs" style="left:1552px;top:773px;width:3px;height:0px;border-top:1px dotted #a8a8a8"></div>
<span class="t" style="left:1590.0px;top:788.5px;color:#000;letter-spacing:-0.09px;">ViCADo-Sicht</span>
<div class="abs" style="left:1877px;top:787px;width:14px;height:14px;border:1px solid #111;box-sizing:border-box;background:#fff"></div>
<svg style="left:1896px;top:789px" width="17" height="10" viewBox="0 0 17 10"><path d="M0.6 5C3 1.2 6 0.6 8.5 0.6S14 1.2 16.4 5C14 8.8 11 9.4 8.5 9.4S3 8.8 0.6 5Z" fill="#fff" stroke="#111" stroke-width="1"/><circle cx="8.5" cy="5" r="3.1" fill="#000"/></svg>
<span class="t" style="left:1610.0px;top:809.5px;color:#000;letter-spacing:-0.79px;">VS-1</span>
<div class="abs" style="left:1877px;top:808px;width:14px;height:14px;border:1px solid #111;box-sizing:border-box;background:#fff"></div>
<svg style="left:1896px;top:810px" width="17" height="10" viewBox="0 0 17 10"><path d="M0.6 5C3 1.2 6 0.6 8.5 0.6S14 1.2 16.4 5C14 8.8 11 9.4 8.5 9.4S3 8.8 0.6 5Z" fill="#fff" stroke="#111" stroke-width="1"/><circle cx="8.5" cy="5" r="3.1" fill="#000"/></svg>
<svg style="left:1535.5px;top:665px" width="8" height="8"><path d="M7 0V7H0Z" fill="#404040"/></svg>
<svg style="left:1555.5px;top:791.5px" width="8" height="8"><path d="M6.5 0V6.5H0Z" fill="#404040"/></svg>
<div class="abs" style="left:1552px;top:795px;width:4px;height:0px;border-top:1px dotted #a8a8a8"></div>
<div class="abs" style="left:1571px;top:806px;width:0px;height:10px;border-left:1px dotted #a8a8a8"></div>
<div class="abs" style="left:1571px;top:815px;width:8px;height:0px;border-top:1px dotted #a8a8a8"></div>
<svg id="ic-tree" style="left:0;top:656px" width="1920" height="180" viewBox="0 656 1920 180"><path d="M1552 664H1558L1559.5 665.3H1566V675H1552Z" fill="#fff" stroke="#9a9a9a" stroke-width="1"/><path d="M1554.2 666.9H1568L1566.7 675.8H1552.6Z" fill="#0a6fc2"/><path d="M1572 692.8L1577 688.3H1588L1583 692.8Z" fill="#7ab317"/><path d="M1572 693.2H1583V695.8H1572Z" fill="#7ab317"/><path d="M1583.4 693L1588 688.9V691.4L1583.4 695.8Z" fill="#6a9e12"/><rect x="1572.6" y="706.8" width="15" height="9.6" fill="#fff" stroke="#0a6fc2" stroke-width="1.3"/><path d="M1573.4 707.6H1583C1577 708.2 1575 710.5 1574.6 715L1573.4 715.6Z" fill="#a6a6a6"/><path d="M1578.1 727.3Q1580 725.6 1581.8 727.3V740.6H1578.1Z" fill="#7ab317"/><path d="M1580.6 727V740.4" stroke="#a8d25a" stroke-width="0.7"/><rect x="1583.30" y="733.00" width="2.6" height="2.6" fill="#fff" stroke="#0a6fc2" stroke-width="1"/><path d="M1584.6 735.9L1581.3999999999999 740.5999999999999H1588.0Z" fill="#fff" stroke="#222" stroke-width="0.9"/><path d="M1576.2 750.2L1581.8 746.2L1583.6 747V757.5L1578.6 761.6H1576.2Z" fill="#7ab317"/><path d="M1578.4 749.6V761.2M1578.6 749.4L1583.4 746.8" stroke="#a8d25a" stroke-width="0.7" fill="none"/><rect x="1583.30" y="753.90" width="2.6" height="2.6" fill="#fff" stroke="#0a6fc2" stroke-width="1"/><path d="M1584.6 756.8000000000001L1581.3999999999999 761.5H1588.0Z" fill="#fff" stroke="#222" stroke-width="0.9"/><path d="M1582.6 768.5V775.5M1582.6 769L1577.6 774V780.5" stroke="#c8232c" stroke-width="1.2" fill="none"/><path d="M1580.8 774.8H1584.4L1582.6 777.2ZM1575.8 779.6H1579.4L1577.6 782Z" fill="#c8232c"/><circle cx="1579.2" cy="795.6" r="7.3" fill="#a6121e"/><path d="M1572.73 793.75L1575.50 791.67L1576.89 797.91L1579.43 790.29L1582.43 790.29L1578.04 800.45L1575.04 800.45Z" fill="#fff"/><path d="M1585.90 793.06C1583.36 791.90 1580.82 793.29 1580.36 796.06C1580.03 798.37 1581.51 799.76 1583.82 799.53L1584.05 798.14C1582.90 798.28 1582.11 797.54 1582.34 796.06C1582.67 794.44 1584.05 793.84 1585.44 794.54Z" fill="#fff"/><rect x="1580.6" y="796.4" width="7.4" height="7.2" fill="#f4f4f4" stroke="#7a7a7a" stroke-width="1"/><path d="M1582.1999999999998 798.6H1586.3999999999999M1582.1999999999998 800.4H1586.3999999999999M1584.1999999999998 798.6V802.1999999999999M1582.1999999999998 802.0H1586.3999999999999" stroke="#8a8a8a" stroke-width="0.7"/><circle cx="1599.8" cy="816.8" r="7.3" fill="#a6121e"/><path d="M1593.33 814.95L1596.10 812.87L1597.49 819.11L1600.03 811.49L1603.03 811.49L1598.64 821.65L1595.64 821.65Z" fill="#fff"/><path d="M1606.50 814.26C1603.96 813.10 1601.42 814.49 1600.96 817.26C1600.63 819.57 1602.11 820.96 1604.42 820.73L1604.65 819.34C1603.50 819.48 1602.71 818.74 1602.94 817.26C1603.27 815.64 1604.65 815.04 1606.04 815.74Z" fill="#fff"/><rect x="1600.8" y="817.6" width="7.4" height="7.2" fill="#f4f4f4" stroke="#7a7a7a" stroke-width="1"/><path d="M1602.3999999999999 819.8000000000001H1606.6M1602.3999999999999 821.6H1606.6M1604.3999999999999 819.8000000000001V823.4M1602.3999999999999 823.2H1606.6" stroke="#8a8a8a" stroke-width="0.7"/></svg>
<div class="abs" style="left:1886px;top:655px;width:34px;height:175px;border:3px solid #ff3c41;box-sizing:border-box;box-shadow:0 1px 4px rgba(0,0,0,.4), inset 0 2px 4px rgba(0,0,0,.18)"></div>
<div class="abs" style="left:1531px;top:994px;width:384px;height:20px;background:#f5f5f5;border-top:1px solid #dcdcdc;box-sizing:border-box"></div>
<div class="abs" style="left:1531px;top:994px;width:48px;height:19px;background:#008e91"></div>
<span class="t" style="left:1537.0px;top:997.0px;font-size:13px;color:#fff;letter-spacing:-0.13px;">Modell</span>
<span class="t" style="left:1586.7px;top:997.0px;font-size:13px;color:#111;letter-spacing:-0.58px;">Eingabehilfe</span>
<span class="t" style="left:1664.0px;top:997.0px;font-size:13px;color:#111;letter-spacing:-0.76px;">Hinweise</span>
<span class="t" style="left:1723.0px;top:997.0px;font-size:13px;color:#111;letter-spacing:-0.56px;">Ausgabenverwaltung</span>
<div class="abs" style="left:1656px;top:998px;width:1px;height:13px;background:#d4d4d4"></div>
<div class="abs" style="left:1716.5px;top:998px;width:1px;height:13px;background:#d4d4d4"></div>
<div class="abs" style="left:1840px;top:998px;width:1px;height:13px;background:#d4d4d4"></div>
</div>
<div id="canvas" style="left:5px;top:180px;width:1518px;height:831px;background:#fff;border-style:solid;border-width:2px 1px 1px 2px;border-color:#696969 #e3e3e3 #e3e3e3 #696969"></div>
<svg id="plan" style="left:0;top:0" width="1920" height="1040" viewBox="0 0 1920 1040" font-family="'Liberation Sans',sans-serif">
<defs>
<pattern id="hc" width="3" height="3" patternUnits="userSpaceOnUse"><rect width="3" height="3" fill="#a6d3a6"/><path d="M-1 1L1 -1M0 3L3 0M2 4L4 2" stroke="#3f8f3f" stroke-width="0.8"/></pattern>
<pattern id="hw" width="3" height="3" patternUnits="userSpaceOnUse"><rect width="3" height="3" fill="#5cb060"/><path d="M-1 1L1 -1M0 3L3 0M2 4L4 2" stroke="#237f23" stroke-width="0.9"/></pattern>
<pattern id="hk" width="4" height="4" patternUnits="userSpaceOnUse"><rect width="4" height="4" fill="#fff"/><path d="M-1 1L1 -1M0 4L4 0M3 5L5 3" stroke="#444" stroke-width="0.8"/></pattern>
<pattern id="hl" width="13.5" height="13.5" patternUnits="userSpaceOnUse" x="368.8" y="567"><path d="M-1 10.6L10.6 -1M2.9 14.5L14.5 2.9" stroke="#3c5a3c" stroke-width="0.9"/></pattern>
</defs>
<rect x="97.5" y="310.5" width="1297" height="584" fill="none" stroke="#747474" stroke-width="1"/>
<rect x="105.3" y="317.3" width="1283.2" height="570.3" fill="#cce6cc"/>
<polygon points="368.8,310.5 611.3,310.5 611.3,488.2 368.8,488.2" fill="#fff"/>
<polygon points="368.8,310.8 611,310.8 500,317.3 368.8,317.3" fill="#808080"/>
<polygon points="368.8,317.3 520,317.3 415,323 383.3,325 368.8,325" fill="#a9a9a9"/>
<polygon points="415,323 520,317.3 611,317.3 383.3,325" fill="#d6d6d6"/>
<polygon points="368.8,325 383.3,325 374.3,420 368.8,488" fill="#808080"/>
<path d="M368.8 310.8H607" stroke="#111" stroke-width="1.4"/>
<path d="M368.8 310.8L383.3 325L374.3 420L369.5 486" stroke="#333" stroke-width="0.9" fill="none"/>
<path d="M368.8 488.2H611.3" stroke="#8f9f8f" stroke-width="1"/>
<path d="M369.2 576.5L377.8 567.5M382.5 576.5L391.1 567.5M463.6 576.5L472.2 567.5M477.0 576.5L485.6 567.5M490.4 576.5L499.0 567.5M503.8 576.5L512.4 567.5M517.2 576.5L525.8 567.5M530.6 576.5L539.2 567.5M544.0 576.5L552.6 567.5M557.4 576.5L566.0 567.5M570.8 576.5L579.4 567.5M584.2 576.5L592.8 567.5M597.6 576.5L606.2 567.5" stroke="#4d6a50" stroke-width="0.9" fill="none"/>
<path d="M368.8 567.5H611.3M368.8 576.5H611.3M392.5 567.5V576.5M463.5 567.5V576.5" stroke="#4d6a50" stroke-width="1" fill="none"/>
<rect x="354.2" y="310.5" width="14.6" height="6.8" fill="url(#hk)" stroke="#222" stroke-width="0.8"/>
<rect x="354.7" y="317.3" width="13.6" height="258.8" fill="url(#hw)" stroke="#078a07" stroke-width="1.1"/>
<rect x="611.3" y="310.5" width="14.6" height="6.8" fill="url(#hk)" stroke="#222" stroke-width="0.8"/>
<rect x="611.8" y="317.3" width="13.6" height="258.8" fill="url(#hw)" stroke="#078a07" stroke-width="1.1"/>
<rect x="1124.3" y="880.5" width="264.5" height="14.4" fill="url(#hw)" stroke="#078a07" stroke-width="1.1"/>
<path d="M1124 887.6H1388.8" stroke="#078a07" stroke-width="1.4"/>
<rect x="1388.8" y="880.3" width="5.8" height="14.2" fill="url(#hk)" stroke="#222" stroke-width="0.8"/>
<rect x="97.4" y="310.5" width="14.6" height="14.4" fill="url(#hc)" stroke="#2a8a2a" stroke-width="1"/>
<rect x="867.7" y="310.5" width="14.6" height="14.4" fill="url(#hc)" stroke="#2a8a2a" stroke-width="1"/>
<rect x="1124.4" y="310.5" width="14.6" height="14.4" fill="url(#hc)" stroke="#2a8a2a" stroke-width="1"/>
<rect x="1380.8" y="310.5" width="14.6" height="14.4" fill="url(#hc)" stroke="#2a8a2a" stroke-width="1"/>
<rect x="97.4" y="562.2" width="14.6" height="14.4" fill="url(#hc)" stroke="#2a8a2a" stroke-width="1"/>
<rect x="867.7" y="562.2" width="14.6" height="14.4" fill="url(#hc)" stroke="#2a8a2a" stroke-width="1"/>
<rect x="1124.4" y="562.2" width="14.6" height="14.4" fill="url(#hc)" stroke="#2a8a2a" stroke-width="1"/>
<rect x="1380.8" y="562.2" width="14.6" height="14.4" fill="url(#hc)" stroke="#2a8a2a" stroke-width="1"/>
<rect x="97.4" y="880.3" width="14.6" height="14.4" fill="url(#hc)" stroke="#2a8a2a" stroke-width="1"/>
<rect x="354.2" y="880.3" width="14.6" height="14.4" fill="url(#hc)" stroke="#2a8a2a" stroke-width="1"/>
<rect x="611" y="880.3" width="14.6" height="14.4" fill="url(#hc)" stroke="#2a8a2a" stroke-width="1"/>
<rect x="867.7" y="880.3" width="14.6" height="14.4" fill="url(#hc)" stroke="#2a8a2a" stroke-width="1"/>
<rect x="105.3" y="317.3" width="1283.2" height="570.3" fill="none" stroke="#078a07" stroke-width="1.25"/>
<circle cx="105.3" cy="317.3" r="3.6" fill="none" stroke="#078a07" stroke-width="1.1"/>
<circle cx="1388.5" cy="317.3" r="3.6" fill="none" stroke="#078a07" stroke-width="1.1"/>
<circle cx="105.3" cy="887.6" r="3.6" fill="none" stroke="#078a07" stroke-width="1.1"/>
<circle cx="1396.2" cy="888" r="3.6" fill="none" stroke="#078a07" stroke-width="1.1"/>
<rect x="752.5" y="456.5" width="12.5" height="14.5" fill="#fff" stroke="#9a9a9a" stroke-width="1"/>
<path d="M753 457h6l-5 1.5v5z" fill="#b0b0b0"/>
<rect x="897.5" y="476.5" width="45" height="47" fill="#fff" stroke="#a0a0a0" stroke-width="1"/>
<polygon points="898,477 936,477 920,478.5 900,480 899.5,501 898,503" fill="#a9a9a9"/>
<path d="M897.5 476V524" stroke="#0a1f0a" stroke-width="1.3"/>
<path d="M95.5 243.5H1394.5" stroke="#5f5f5f" stroke-width="1"/>
<path d="M97.5 239.0V253.5M95.0 246.0L100.0 241.0" stroke="#5f5f5f" stroke-width="1" fill="none"/>
<path d="M112.5 239.0V253.5M110.0 246.0L115.0 241.0" stroke="#5f5f5f" stroke-width="1" fill="none"/>
<path d="M354.5 239.0V253.5M352.0 246.0L357.0 241.0" stroke="#5f5f5f" stroke-width="1" fill="none"/>
<path d="M368.5 239.0V253.5M366.0 246.0L371.0 241.0" stroke="#5f5f5f" stroke-width="1" fill="none"/>
<path d="M611.5 239.0V253.5M609.0 246.0L614.0 241.0" stroke="#5f5f5f" stroke-width="1" fill="none"/>
<path d="M625.5 239.0V253.5M623.0 246.0L628.0 241.0" stroke="#5f5f5f" stroke-width="1" fill="none"/>
<path d="M867.5 239.0V253.5M865.0 246.0L870.0 241.0" stroke="#5f5f5f" stroke-width="1" fill="none"/>
<path d="M881.5 239.0V253.5M879.0 246.0L884.0 241.0" stroke="#5f5f5f" stroke-width="1" fill="none"/>
<path d="M1124.5 239.0V253.5M1122.0 246.0L1127.0 241.0" stroke="#5f5f5f" stroke-width="1" fill="none"/>
<path d="M1138.5 239.0V253.5M1136.0 246.0L1141.0 241.0" stroke="#5f5f5f" stroke-width="1" fill="none"/>
<path d="M1380.5 239.0V253.5M1378.0 246.0L1383.0 241.0" stroke="#5f5f5f" stroke-width="1" fill="none"/>
<path d="M1394.5 239.0V253.5M1392.0 246.0L1397.0 241.0" stroke="#5f5f5f" stroke-width="1" fill="none"/>
<text x="96.5" y="240" text-anchor="end" font-size="13" fill="#666">30</text>
<text x="352.5" y="240" text-anchor="end" font-size="13" fill="#666">30</text>
<text x="626" y="240" text-anchor="start" font-size="13" fill="#666">30</text>
<text x="882" y="240" text-anchor="start" font-size="13" fill="#666">30</text>
<text x="1138.8" y="240" text-anchor="start" font-size="13" fill="#666">30</text>
<text x="1395" y="240" text-anchor="start" font-size="13" fill="#666">30</text>
<text x="232" y="240" text-anchor="middle" font-size="13" fill="#666">5.10</text>
<text x="489" y="240" text-anchor="middle" font-size="13" fill="#666">5.10</text>
<text x="745" y="240" text-anchor="middle" font-size="13" fill="#666">5.10</text>
<text x="1002" y="240" text-anchor="middle" font-size="13" fill="#666">5.10</text>
<text x="1259" y="240" text-anchor="middle" font-size="13" fill="#666">5.10</text>
<path d="M352 628.5H943" stroke="#5f5f5f" stroke-width="1"/>
<path d="M354.5 619.0V633.0M352.0 631.0L357.0 626.0" stroke="#5f5f5f" stroke-width="1" fill="none"/>
<path d="M368.5 619.0V633.0M366.0 631.0L371.0 626.0" stroke="#5f5f5f" stroke-width="1" fill="none"/>
<path d="M392.5 619.0V633.0M390.0 631.0L395.0 626.0" stroke="#5f5f5f" stroke-width="1" fill="none"/>
<path d="M463.5 619.0V633.0M461.0 631.0L466.0 626.0" stroke="#5f5f5f" stroke-width="1" fill="none"/>
<path d="M611.5 619.0V633.0M609.0 631.0L614.0 626.0" stroke="#5f5f5f" stroke-width="1" fill="none"/>
<path d="M625.5 619.0V633.0M623.0 631.0L628.0 626.0" stroke="#5f5f5f" stroke-width="1" fill="none"/>
<path d="M867.5 619.0V633.0M865.0 631.0L870.0 626.0" stroke="#5f5f5f" stroke-width="1" fill="none"/>
<path d="M881.5 619.0V633.0M879.0 631.0L884.0 626.0" stroke="#5f5f5f" stroke-width="1" fill="none"/>
<path d="M897.5 619.0V633.0M895.0 631.0L900.0 626.0" stroke="#5f5f5f" stroke-width="1" fill="none"/>
<path d="M942.5 619.0V633.0M940.0 631.0L945.0 626.0" stroke="#5f5f5f" stroke-width="1" fill="none"/>
<text x="352.5" y="623.8" text-anchor="end" font-size="13" fill="#666">30</text>
<text x="379.6" y="623.8" text-anchor="middle" font-size="13" fill="#666">50</text>
<text x="427.5" y="623.8" text-anchor="middle" font-size="13" fill="#666">1.50</text>
<text x="537" y="623.8" text-anchor="middle" font-size="13" fill="#666">3.10</text>
<text x="626.5" y="623.8" text-anchor="start" font-size="13" fill="#666">30</text>
<text x="745" y="623.8" text-anchor="middle" font-size="13" fill="#666">5.10</text>
<text x="865.5" y="623.8" text-anchor="end" font-size="13" fill="#666">30</text>
<text x="915" y="623.8" text-anchor="middle" font-size="13" fill="#666">94</text>
<text x="888.7" y="608.3" text-anchor="middle" font-size="13" fill="#666">33</text>
<text x="926" y="617.5" text-anchor="middle" font-size="9" fill="#666">5</text>
<path d="M95.5 956.5H1396" stroke="#5f5f5f" stroke-width="1"/>
<path d="M97.5 946.0V961.0M95.0 959.0L100.0 954.0" stroke="#5f5f5f" stroke-width="1" fill="none"/>
<path d="M112.5 946.0V961.0M110.0 959.0L115.0 954.0" stroke="#5f5f5f" stroke-width="1" fill="none"/>
<path d="M354.5 946.0V961.0M352.0 959.0L357.0 954.0" stroke="#5f5f5f" stroke-width="1" fill="none"/>
<path d="M368.5 946.0V961.0M366.0 959.0L371.0 954.0" stroke="#5f5f5f" stroke-width="1" fill="none"/>
<path d="M611.5 946.0V961.0M609.0 959.0L614.0 954.0" stroke="#5f5f5f" stroke-width="1" fill="none"/>
<path d="M625.5 946.0V961.0M623.0 959.0L628.0 954.0" stroke="#5f5f5f" stroke-width="1" fill="none"/>
<path d="M867.5 946.0V961.0M865.0 959.0L870.0 954.0" stroke="#5f5f5f" stroke-width="1" fill="none"/>
<path d="M881.5 946.0V961.0M879.0 959.0L884.0 954.0" stroke="#5f5f5f" stroke-width="1" fill="none"/>
<path d="M1124.5 946.0V961.0M1122.0 959.0L1127.0 954.0" stroke="#5f5f5f" stroke-width="1" fill="none"/>
<path d="M1394.5 946.0V961.0M1392.0 959.0L1397.0 954.0" stroke="#5f5f5f" stroke-width="1" fill="none"/>
<text x="96.5" y="952" text-anchor="end" font-size="13" fill="#666">30</text>
<text x="232" y="952" text-anchor="middle" font-size="13" fill="#666">5.10</text>
<text x="352.5" y="952" text-anchor="end" font-size="13" fill="#666">30</text>
<text x="489" y="952" text-anchor="middle" font-size="13" fill="#666">5.10</text>
<text x="626" y="952" text-anchor="start" font-size="13" fill="#666">30</text>
<text x="745" y="952" text-anchor="middle" font-size="13" fill="#666">5.10</text>
<text x="865.5" y="952" text-anchor="end" font-size="13" fill="#666">30</text>
<text x="1001.5" y="952" text-anchor="middle" font-size="13" fill="#666">5.10</text>
<text x="1259" y="952" text-anchor="middle" font-size="13" fill="#666">5.70</text>
<path d="M95.5 984.5H1396" stroke="#5f5f5f" stroke-width="1"/>
<path d="M97.5 974.5V989.0M95.0 987.0L100.0 982.0" stroke="#5f5f5f" stroke-width="1" fill="none"/>
<path d="M1394.5 974.5V989.0M1392.0 987.0L1397.0 982.0" stroke="#5f5f5f" stroke-width="1" fill="none"/>
<text x="745.5" y="980" text-anchor="middle" font-size="13" fill="#666">27.30</text>
<path d="M46.5 308V896.5" stroke="#5f5f5f" stroke-width="1"/>
<path d="M41.0 310.5H55.5M44.0 313.0L49.0 308.0" stroke="#5f5f5f" stroke-width="1" fill="none"/>
<path d="M41.0 894.5H55.5M44.0 897.0L49.0 892.0" stroke="#5f5f5f" stroke-width="1" fill="none"/>
<text transform="translate(42.3 601.5) rotate(-90)" text-anchor="middle" font-size="13" fill="#666">12.30</text>
<path d="M659.5 308V578.5" stroke="#5f5f5f" stroke-width="1"/>
<path d="M650.0 310.5H664.5M657.0 313.0L662.0 308.0" stroke="#5f5f5f" stroke-width="1" fill="none"/>
<path d="M650.0 488.5H664.5M657.0 491.0L662.0 486.0" stroke="#5f5f5f" stroke-width="1" fill="none"/>
<path d="M650.0 576.5H664.5M657.0 579.0L662.0 574.0" stroke="#5f5f5f" stroke-width="1" fill="none"/>
<text transform="translate(656.3 399) rotate(-90)" text-anchor="middle" font-size="7.5" fill="#555">3.75</text>
<text transform="translate(656.3 532) rotate(-90)" text-anchor="middle" font-size="7.5" fill="#555">1.85</text>
<path d="M1472.5 308.5V896.5" stroke="#5f5f5f" stroke-width="1"/>
<path d="M1462.0 310.5H1477.0M1470.0 313.0L1475.0 308.0" stroke="#5f5f5f" stroke-width="1" fill="none"/>
<path d="M1462.0 323.5H1477.0M1470.0 326.0L1475.0 321.0" stroke="#5f5f5f" stroke-width="1" fill="none"/>
<path d="M1462.0 561.5H1477.0M1470.0 564.0L1475.0 559.0" stroke="#5f5f5f" stroke-width="1" fill="none"/>
<path d="M1462.0 576.5H1477.0M1470.0 579.0L1475.0 574.0" stroke="#5f5f5f" stroke-width="1" fill="none"/>
<path d="M1462.0 880.5H1477.0M1470.0 883.0L1475.0 878.0" stroke="#5f5f5f" stroke-width="1" fill="none"/>
<path d="M1462.0 894.5H1477.0M1470.0 897.0L1475.0 892.0" stroke="#5f5f5f" stroke-width="1" fill="none"/>
<text transform="translate(1467 301.2) rotate(-90)" text-anchor="middle" font-size="13" fill="#666">30</text>
<text transform="translate(1467 442.7) rotate(-90)" text-anchor="middle" font-size="13" fill="#666">5.00</text>
<text transform="translate(1467 584.3) rotate(-90)" text-anchor="middle" font-size="13" fill="#666">30</text>
<text transform="translate(1467 728.3) rotate(-90)" text-anchor="middle" font-size="13" fill="#666">6.40</text>
<text transform="translate(1467 902.5) rotate(-90)" text-anchor="middle" font-size="13" fill="#666">30</text>
</svg>

</div></body></html>
